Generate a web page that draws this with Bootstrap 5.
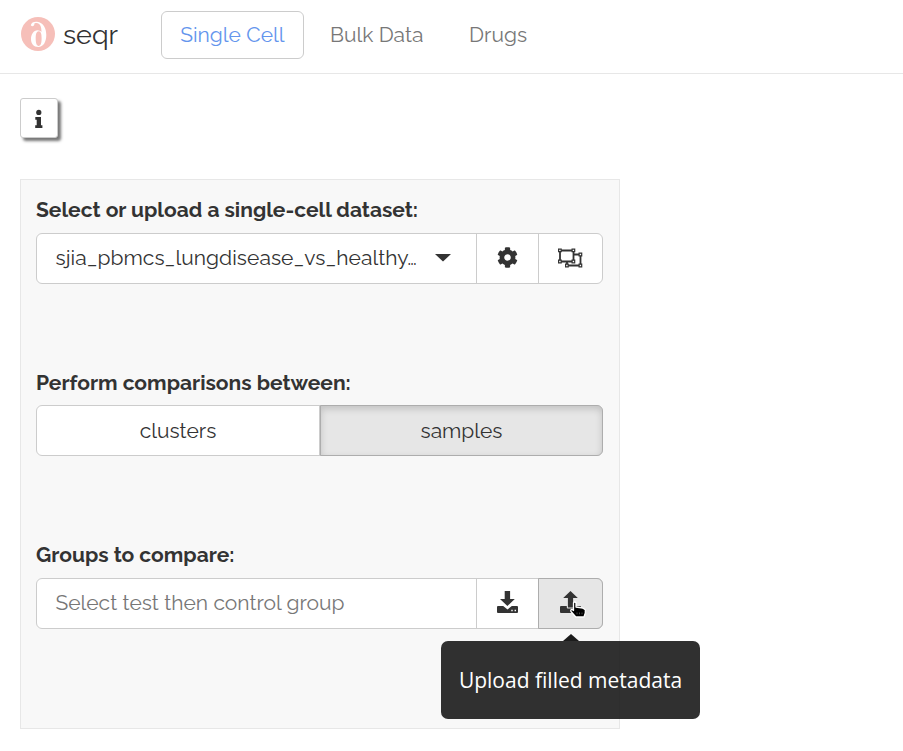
<!DOCTYPE html>
<html lang="en">
<head>
<meta charset="utf-8">
<meta name="viewport" content="width=device-width, initial-scale=1">
<title>seqr</title>
<link href="https://cdn.jsdelivr.net/npm/bootstrap@5.3.0/dist/css/bootstrap.min.css" rel="stylesheet">
<style>
body{font-family:Raleway,Lato,"Open Sans",sans-serif;font-size:21px;line-height:30px;color:#333;background:#fff}
.topbar{height:74px;border-bottom:1px solid #e7e7e7;padding:0 0 3px 21px}
.brand-name{font-size:27px;color:#333;width:106px;padding:0 0 1px 8px}
.logo{width:34px;height:34px;margin-bottom:2px}
.tabs{gap:7px}
.tab-link{height:48px;border:1px solid transparent;border-radius:6px;padding:0 18.300px;color:#777;line-height:46px;text-decoration:none;white-space:nowrap}
.tab-link.current{border-color:#ccc;color:#6495ed}
.info-btn{width:38px;height:40px;margin:24px 0 0 20px;border:1px solid #ccc;border-radius:3px;background:#fff;box-shadow:3px 3px 3px #777;padding:2px 0 0}
.panel{width:600px;height:550px;margin:41px 0 0 20px;background:#f8f8f8;border:1px solid #e7e7e7;padding:15px}
.field{height:172px}
.field + .field{height:173px}
.field-label{font-weight:700;height:30px;margin-bottom:8px;white-space:nowrap}
.field-label.low{padding-top:1px}
.ctl{height:51px;width:567px;border:1px solid #ccc;border-radius:6px;background:#fff}
.pick{width:439px;padding:0 0 2px 18.500px;white-space:nowrap}
.dataset{letter-spacing:.06px}
.pick .arrow{margin:1px 0 0 18px}
.icon-btn{width:62px;border:0;border-left:1px solid #ccc;background:transparent;padding:0 0 2px}
.icon-btn.wide{width:64px;flex:1;padding-right:1px}
.ctl .hovered{background:#e6e6e6;border:1px solid #adadad;margin:-1px -1px -1px 0;border-radius:0 6px 6px 0}
.seg{width:283px;background:transparent;border:0;border-right:1px solid #ccc;padding:1px 0 0;color:#333}
.seg.on{background:#e6e6e6;border:1px solid #adadad;box-shadow:inset 0 3px 7px rgba(0,0,0,.16);border-radius:0 6px 6px 0;margin:-1px -1px -1px 0}
.ph{color:#777}
.tip{position:absolute;left:441px;top:641px;width:259px;height:78px;border-radius:7px;background:rgba(26,26,26,.9);color:#fff;font-family:"Open Sans","Noto Sans",sans-serif;font-size:21px}
.tip::before{content:"";position:absolute;left:122px;top:-7px;border:solid transparent;border-width:0 8px 7px;border-bottom-color:#1c1c1c}
.pointer{position:absolute;left:569px;top:600px}
</style>
</head>
<body>
<nav class="topbar d-flex align-items-center">
  <svg class="logo" viewBox="0 0 34 34"><circle cx="17" cy="17" r="17" fill="#f6bfb9"/><path fill="#fff" fill-rule="evenodd" d="M9.800 8.200C10.300 5.500 13 4.500 16 4.800c6.500.7 9.300 7 9.300 13.200 0 7-3 12-8 12-4.700 0-7.300-3.500-7.300-8s2.600-8.700 6.500-8.700c1.600 0 3 .7 4 1.700C20.500 9.500 19 6 15.500 5.900c-1.300 0-1.900.3-2.200.7.700 2.400-2.300 3.500-3.500 1.600zM17.800 14.300c-2.400 0-3.100 3-3.100 7.200s.8 7.400 2.900 7.400c2.300 0 3-3.200 3-7.400s-.6-7.200-2.800-7.200z"/></svg>
  <span class="brand-name">seqr</span>
  <div class="tabs d-flex">
    <a class="tab-link current" href="#">Single Cell</a>
    <a class="tab-link" href="#">Bulk Data</a>
    <a class="tab-link" href="#">Drugs</a>
  </div>
</nav>
<button class="info-btn d-flex align-items-center justify-content-center" aria-label="Information"><svg width="8" height="20" viewBox="0 0 8 20" fill="#333"><circle cx="3.800" cy="3.400" r="2.600"/><path d="M.3 8h5.700v8.300h1.400V19H.2v-2.700h1.500v-5.500H.3z"/></svg></button>
<main class="panel">
  <div class="field">
    <div class="field-label">Select or upload a single-cell dataset:</div>
    <div class="ctl d-flex">
      <div class="pick d-flex align-items-center"><span class="dataset">sjia_pbmcs_lungdisease_vs_healthy…</span><svg class="arrow" width="16" height="8" fill="#333"><path d="M0 0h16L8 7.500z"/></svg></div>
      <button class="icon-btn d-flex align-items-center justify-content-center" aria-label="Settings"><svg width="21" height="21" viewBox="0 0 512 512" fill="#333"><path d="M487.400 315.700l-42.600-24.600c4.300-23.200 4.300-47 0-70.200l42.600-24.600c4.900-2.800 7.100-8.600 5.500-14-11.100-35.600-30-67.800-54.700-94.600-3.800-4.100-10-5.100-14.800-2.300L380.800 110c-17.900-15.400-38.500-27.300-60.800-35.100V25.800c0-5.600-3.900-10.500-9.400-11.700-36.700-8.200-74.300-7.800-109.200 0-5.500 1.200-9.400 6.100-9.400 11.700V75c-22.200 7.900-42.800 19.800-60.800 35.100L88.700 85.500c-4.900-2.800-11-1.900-14.800 2.300-24.700 26.700-43.600 58.900-54.700 94.600-1.700 5.400.6 11.200 5.500 14L67.300 221c-4.300 23.200-4.300 47 0 70.200l-42.600 24.600c-4.900 2.800-7.100 8.600-5.500 14 11.100 35.600 30 67.800 54.700 94.600 3.800 4.100 10 5.100 14.800 2.300l42.600-24.600c17.900 15.400 38.500 27.300 60.800 35.100v49.200c0 5.600 3.900 10.500 9.400 11.700 36.700 8.200 74.300 7.800 109.200 0 5.500-1.200 9.400-6.100 9.400-11.700v-49.200c22.200-7.900 42.800-19.800 60.800-35.100l42.600 24.600c4.900 2.800 11 1.900 14.800-2.300 24.700-26.700 43.600-58.900 54.700-94.600 1.500-5.500-.7-11.300-5.600-14.100zM256 336c-44.100 0-80-35.900-80-80s35.900-80 80-80 80 35.900 80 80-35.900 80-80 80z"/></svg></button>
      <button class="icon-btn wide d-flex align-items-center justify-content-center" aria-label="Integrate"><svg width="26" height="20" viewBox="0 0 26 20" fill="#fff" stroke="#333"><path stroke-width="1.800" d="M16 6.500h7.500v11H10V13M3 2.500h13.500v11H3z"/><g stroke-width="1.200"><path d="M1.600 1.100h2.600v2.600H1.600zM15.100 1.100h2.600v2.600h-2.600zM1.600 12.200h2.600v2.600H1.600zM15.100 12.200h2.600v2.600h-2.600zM22.100 5.200h2.600v2.600h-2.600zM22.100 16.200h2.600v2.600h-2.600zM8.600 16.200h2.600v2.600H8.600z"/></g></svg></button>
    </div>
  </div>
  <div class="field">
    <div class="field-label low">Perform comparisons between:</div>
    <div class="ctl d-flex"><button class="seg">clusters</button><button class="seg on">samples</button></div>
  </div>
  <div class="field">
    <div class="field-label">Groups to compare:</div>
    <div class="ctl d-flex">
      <div class="pick ph d-flex align-items-center">Select test then control group</div>
      <button class="icon-btn d-flex align-items-center justify-content-center" aria-label="Download metadata"><svg width="21" height="23" viewBox="0 0 21 23" fill="#333"><path d="M7.700 0h5.400v8h4.700l-7.400 7L3 8h4.700zM1 15h5.200l4.300 3.500 4.300-3.500H20q1 0 1 1v5q0 1-1 1H1q-1 0-1-1v-5q0-1 1-1z"/><path fill="#fff" d="M14.300 18.800h1.400v1.400h-1.400zM17.600 18.800H19v1.400h-1.400z"/></svg></button>
      <button class="icon-btn wide hovered d-flex align-items-center justify-content-center" aria-label="Upload metadata"><svg width="21" height="23" viewBox="0 0 21 23" fill="#333"><path d="M10.500 0l7.300 7h-4.700v9.500H7.900V7H3.200zM1 15h5.800v1.500q0 1 1 1h5.400q1 0 1-1V15H20q1 0 1 1v5q0 1-1 1H1q-1 0-1-1v-5q0-1 1-1z"/></svg></button>
    </div>
  </div>
</main>
<svg class="pointer" width="18" height="19" viewBox="0 0 18 19"><path d="M4.500 2.700q1.200-1.400 2.500 0V7l7 1.200 2.300 1.500V13L15 17H6.800L2 11.500q-.8-1.700.8-2.200l1.700 1.200z" fill="#000" stroke="#fff" stroke-width="1.300" stroke-linejoin="round"/><path d="M8 12.500v1.800M10.500 12.500v1.800M13 12.500v1.800" stroke="#777" stroke-width=".6"/></svg>
<div class="tip d-flex align-items-center justify-content-center" role="tooltip">Upload filled metadata</div>
<script src="https://cdn.jsdelivr.net/npm/bootstrap@5.3.0/dist/js/bootstrap.bundle.min.js"></script>
</body>
</html>
